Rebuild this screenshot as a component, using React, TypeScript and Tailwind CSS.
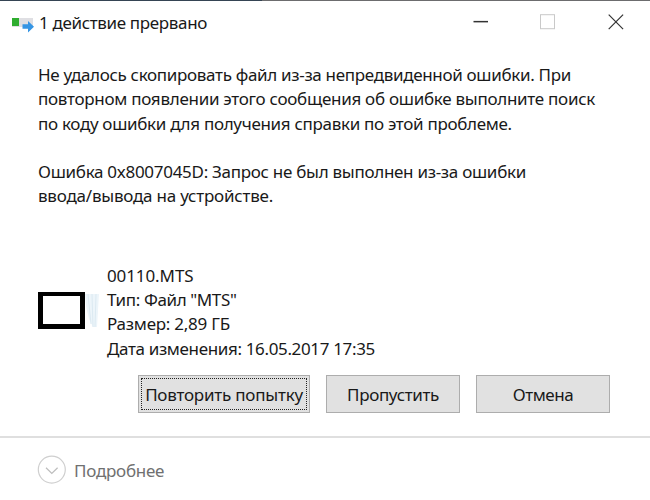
import React from "react";

const messageLines = [
  { text: "Не удалось скопировать файл из-за непредвиденной ошибки. При", style: "tracking-[-0.32px]" },
  { text: "повторном появлении этого сообщения об ошибке выполните поиск", style: "tracking-[-0.28px]" },
  { text: "по коду ошибки для получения справки по этой проблеме.", style: "tracking-[-0.31px]" },
  { text: "\u00a0", style: "" },
  { text: "Ошибка 0x8007045D: Запрос не был выполнен из-за ошибки", style: "tracking-[-0.29px]" },
  { text: "ввода/вывода на устройстве.", style: "tracking-[-0.22px]" },
];

const fileLines = [
  { text: "00110.MTS", style: "tracking-[-0.1px]" },
  { text: 'Тип: Файл "MTS"', style: "tracking-[-0.38px]" },
  { text: "Размер: 2,89 ГБ", style: "tracking-[-0.25px]" },
  { text: "Дата изменения: 16.05.2017 17:35", style: "tracking-[-0.35px]" },
];

function TitleBar() {
  return (
    <header className="flex h-[43px] items-start">
      <svg className="mt-[15px] ml-3 h-[18px] w-[22px] shrink-0" viewBox="0 0 22 18">
        <rect x="0" y="2" width="21" height="9" fill="#dfdfe3" />
        <rect x="0" y="2" width="7" height="8" fill="#2fad2f" />
        <path d="M10.5 8.3H16V5L22 10.7l-6 5.8v-3.7h-5.5z" fill="#3595e4" />
      </svg>
      <h1 className="mt-[10px] ml-[5px] w-[420px] text-[17px] leading-6 tracking-[-0.34px]">1 действие прервано</h1>
      <div className="mt-[13px] ml-[14px] flex gap-[52px]">
        <svg className="h-4 w-[15px]" viewBox="0 0 15 16">
          <rect x="0.5" y="6.9" width="14.5" height="1.5" fill="#333" />
        </svg>
        <svg className="h-4 w-[15px]" viewBox="0 0 15 16">
          <rect x="0.5" y="0.7" width="14" height="14" fill="none" stroke="#c9c9c9" />
        </svg>
        <svg className="h-4 w-[17px]" viewBox="0 0 17 16">
          <path d="M1.7.7l14.4 14.4M16.1.7L1.7 15.1" stroke="#333" strokeWidth="1.2" />
        </svg>
      </div>
    </header>
  );
}

export default function App() {
  return (
    <div className="flex h-[500px] w-[650px] flex-col overflow-hidden bg-white font-['Noto_Sans',sans-serif] text-[17px] text-[#191919]">
      <div className="flex h-px shrink-0">
        <div className="w-[262px] bg-[#354453]" />
        <div className="grow bg-[#6c6c6e]" />
      </div>
      <TitleBar />
      <main className="flex h-[392px] flex-col">
        <div className="mt-[19px] ml-[38px] leading-[24.3px] whitespace-nowrap">
          {messageLines.map((l, i) => (
            <p key={i} className={l.style}>{l.text}</p>
          ))}
        </div>
        <div className="mt-[55px] ml-[38px] flex">
          <div className="mt-[28px] flex h-[38px] w-[69px] items-start">
            <div className="h-[37px] w-[47px] border-x-[5px] border-t-4 border-b-[5px] border-black bg-white" />
            <svg className="h-[37px] w-[15px]" viewBox="0 0 15 37">
              <path d="M0 2h14l-2 33H8L4 27 1 14z" fill="#edf5fa" />
              <path d="M3 2l3 30M7 2l1 33M11 2l-1 33" stroke="#dceaf2" />
            </svg>
          </div>
          <div className="leading-[24.3px] whitespace-nowrap">
            {fileLines.map((l) => (
              <p key={l.text} className={l.style}>{l.text}</p>
            ))}
          </div>
        </div>
        <div className="mt-[14px] ml-[138px] flex h-[38px] gap-4">
          <button className="w-[172px] border border-[#adadad] bg-[#e1e1e1] p-[2px]">
            <span className="flex h-full items-center justify-center border border-dotted border-[#222] pt-0.5 tracking-[-0.22px] whitespace-nowrap">Повторить попытку</span>
          </button>
          <button className="w-[134px] border border-[#adadad] bg-[#e1e1e1] pt-0.5 tracking-[-0.35px]">Пропустить</button>
          <button className="w-[134px] border border-[#adadad] bg-[#e1e1e1] pt-0.5 tracking-[-0.45px]">Отмена</button>
        </div>
      </main>
      <footer className="flex grow items-start border-t-2 border-[#dfdfdf] text-[#707070]">
        <svg className="mt-[17px] ml-[37px] h-[30px] w-[30px]" viewBox="0 0 30 30" fill="none">
          <circle cx="14.8" cy="14.6" r="13.5" stroke="#cfcfcf" strokeWidth="1.2" />
          <path d="M9 12.8l5.8 5.7 5.8-5.7" stroke="#bdbdbd" strokeWidth="1.2" />
        </svg>
        <span className="mt-[21px] ml-[7px] leading-6 tracking-[-0.25px]">Подробнее</span>
      </footer>
    </div>
  );
}
